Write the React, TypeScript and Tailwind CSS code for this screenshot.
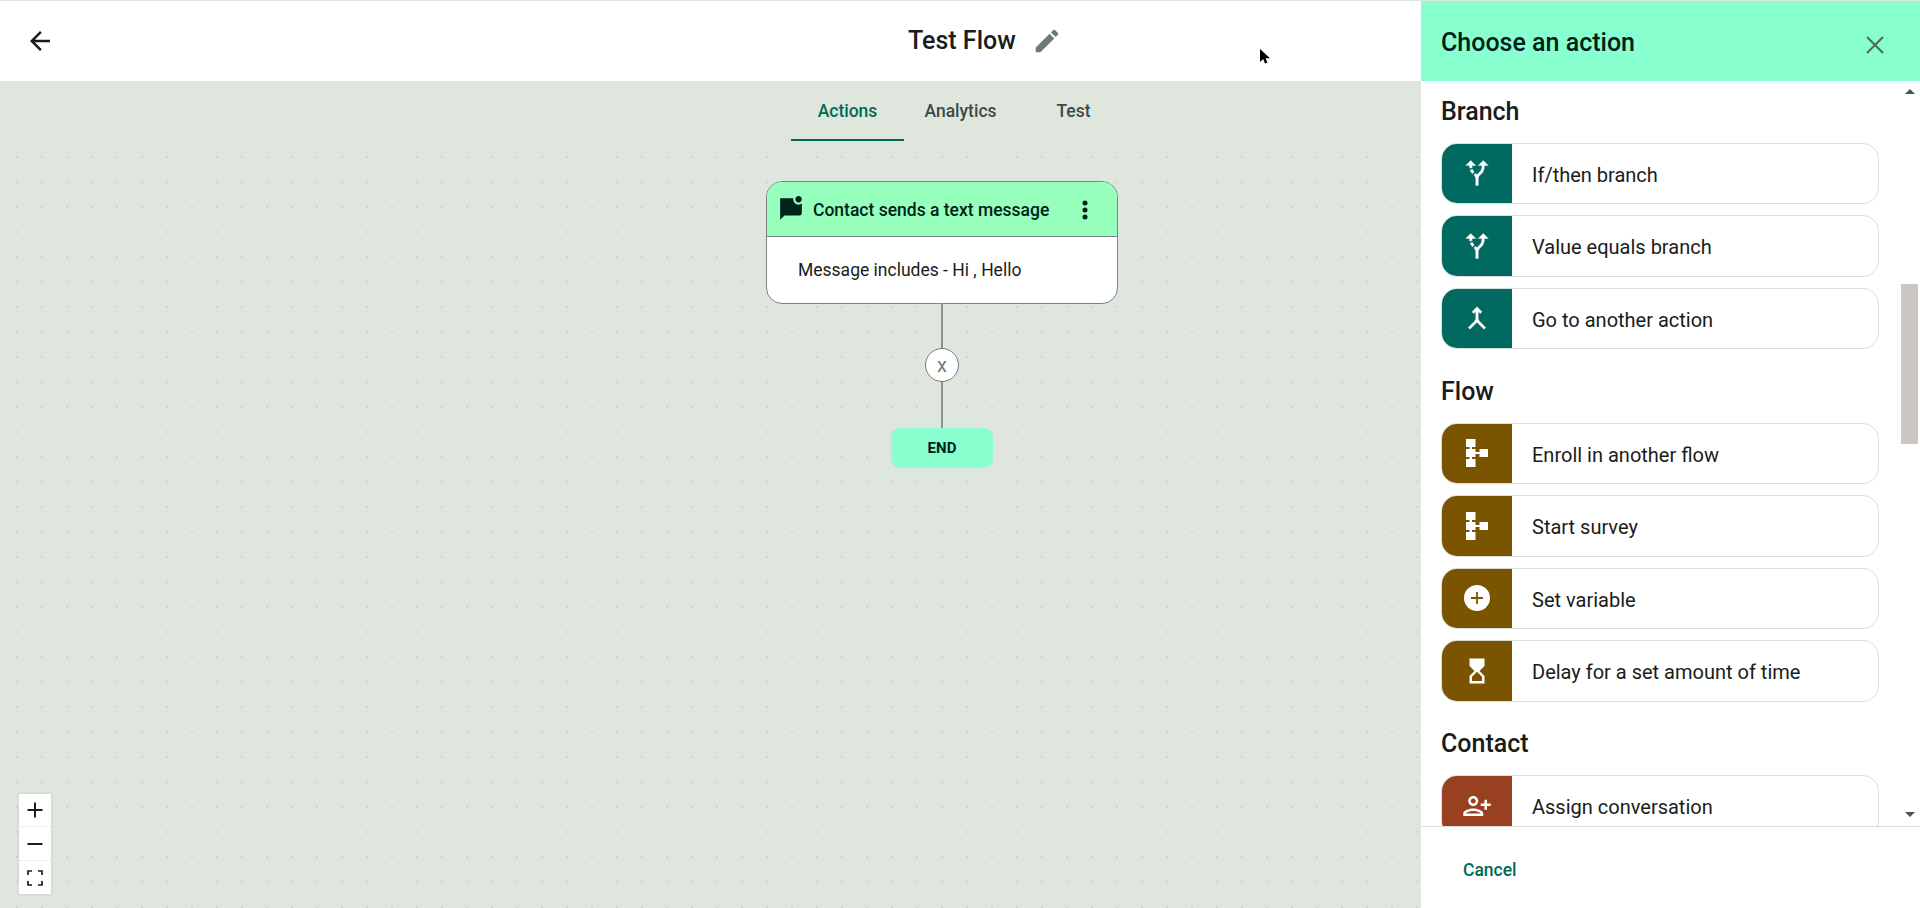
import React from "react";

const FONT = "font-['Roboto',sans-serif]";

const Icon = ({ d, size = 30, className = "" }: { d: string; size?: number; className?: string }) => (
  <svg width={size} height={size} viewBox="0 0 24 24" className={className} fill="currentColor">
    <path d={d} fillRule="evenodd" />
  </svg>
);

const ALT_ROUTE =
  "M9.78,11.16l-1.42,1.42c-0.68-0.69-1.34-1.58-1.79-2.94l1.94-0.49C8.83,10.04,9.28,10.65,9.78,11.16z M11,6L7,2L3,6h3.02C6.04,6.81,6.1,7.54,6.21,8.17l1.94-0.49C8.08,7.2,8.03,6.63,8.02,6H11z M21,6l-4-4l-4,4h2.99c-0.1,3.68-1.28,4.75-2.54,5.88c-0.5,0.44-1.01,0.92-1.45,1.55c-0.34-0.49-0.73-0.88-1.13-1.24L9.46,13.6C10.39,14.45,11,15.14,11,17c0,0,0,0,0,0h0v5h2v-5c0,0,0,0,0,0c0-2.02,0.71-2.66,1.79-3.63c1.38-1.24,3.08-2.78,3.2-7.37H21z";
const MERGE =
  "M6.41,21L5,19.59l4.83-4.83c0.75-0.75,1.17-1.77,1.17-2.83v-5.1L9.41,8.41L8,7l4-4l4,4l-1.41,1.41L13,6.83v5.1c0,1.06,0.42,2.08,1.17,2.83L19,19.59L17.59,21L12,15.41L6.41,21z";
const HOURGLASS =
  "M6,2l0.01,6L10,12l-3.99,4.01L6,22h12v-6l-4-4l4-3.99V2H6z M16,16.5V20H8v-3.5l4-4L16,16.5z";
const PERSON_ADD =
  "M9 12c2.21 0 4-1.79 4-4s-1.79-4-4-4-4 1.79-4 4 1.79 4 4 4zm0-6c1.1 0 2 .9 2 2s-.9 2-2 2-2-.9-2-2 .9-2 2-2zm0 8c-2.67 0-8 1.34-8 4v2h16v-2c0-2.66-5.33-4-8-4zm-6 4c.22-.72 3.31-2 6-2 2.7 0 5.8 1.29 6 2H3zm15-3v-3h-3v-2h3V7h2v3h3v2h-3v3h-2z";

const FlowIcon = () => (
  <svg width="22" height="28" viewBox="0 0 22 28" fill="white">
    <rect x="0" y="0" width="9.5" height="8" />
    <rect x="0" y="10" width="9.5" height="8" />
    <rect x="0" y="20" width="9.5" height="8" />
    <rect x="3.5" y="7" width="2.5" height="14" />
    <rect x="9" y="13" width="5" height="2" />
    <rect x="13.5" y="10" width="8.5" height="8" />
  </svg>
);

const PlusCircle = () => (
  <svg width="26" height="26" viewBox="0 0 26 26">
    <circle cx="13" cy="13" r="13" fill="white" />
    <path d="M13 7v12M7 13h12" stroke="#7b5400" strokeWidth="1.8" />
  </svg>
);

type Action = { label: string; icon: React.ReactNode };

const ActionRow = ({ label, icon, color }: Action & { color: string }) => (
  <div className="flex h-[61.5px] shrink-0 items-stretch overflow-hidden rounded-[16px] border border-[#d9e0dc] bg-white">
    <div className={`flex w-[70px] shrink-0 items-center justify-center text-white ${color}`}>{icon}</div>
    <span className="flex items-center pt-[3px] pl-[20px] text-[20px] leading-none text-[#191c1a]">{label}</span>
  </div>
);

const Section = ({ title, color, actions }: { title: string; color: string; actions: Action[] }) => (
  <section className="flex flex-col">
    <h3 className="mb-[17px] h-[29px] text-[25px] leading-[29px] font-medium text-[#191c1a]">{title}</h3>
    <div className="flex flex-col gap-[11px]">
      {actions.map((a) => (
        <ActionRow key={a.label} {...a} color={color} />
      ))}
    </div>
  </section>
);

const Scrollbar = () => (
  <div className="absolute top-0 right-[2px] bottom-0 flex w-[17px] flex-col items-center">
    <div className="mt-[8px] h-0 w-0 border-x-[5px] border-b-[5px] border-x-transparent border-b-[#44574c]" />
    <div className="mt-[190px] h-[160px] w-[17px] shrink-0 bg-[#cdc5c3]" />
    <div className="mt-auto mb-[9px] h-0 w-0 border-x-[5px] border-t-[5px] border-x-transparent border-t-[#44574c]" />
  </div>
);

const FlowNodes = () => (
  <>
    {/* trigger node */}
    <div className="absolute top-[39px] left-[766px] w-[352px] overflow-hidden rounded-[16px] border border-[#77857c] bg-white">
      <div className="flex h-[55px] items-center border-b border-[#77857c] bg-[#96ffbc] pt-[2px] pl-[11px]">
        <Icon
          size={26}
          className="mb-[3px] text-[#00221a]"
          d="M22 6.98V16c0 1.1-.9 2-2 2H6l-4 4V2h12.1c-.06.32-.1.66-.1 1 0 2.76 2.24 5 5 5 1.13 0 2.16-.39 3-1.02zM16 3c0 1.66 1.34 3 3 3s3-1.34 3-3-1.34-3-3-3-3 1.34-3 3z"
        />
        <span className="ml-[9px] text-[17.5px] font-medium whitespace-nowrap text-[#00211a]">Contact sends a text message</span>
        <svg width="6" height="20" viewBox="0 0 6 20" className="ml-[33px]" fill="#00211a">
          <circle cx="3" cy="3" r="2.5" />
          <circle cx="3" cy="10" r="2.5" />
          <circle cx="3" cy="17" r="2.5" />
        </svg>
      </div>
      <div className="flex h-[66px] items-center pl-[31px] text-[17.5px] text-[#191c1a]">Message includes - Hi , Hello</div>
    </div>
    {/* connector */}
    <div className="absolute top-[161px] left-[941px] h-[125px] w-[2px] bg-[#8b958e]" />
    <div className="absolute top-[206px] left-[925px] flex h-[34px] w-[34px] items-center justify-center rounded-full border border-[#6f7d74] bg-white pb-[1px] text-[20px] text-[#6f7d74]">
      x
    </div>
    <div className="absolute top-[286px] left-[891px] flex h-[40px] w-[102px] items-center justify-center rounded-[9px] bg-[#88ffcf] text-[15px] font-bold text-[#00211a]">
      END
    </div>
  </>
);

const ZoomControls = () => (
  <div className="absolute bottom-[14px] left-[19px] flex w-[32px] flex-col bg-white shadow-[0_0_2px_1px_rgba(0,0,0,0.08)]">
    <button className="flex h-[33px] items-center justify-center border-b border-[#eeeeee]">
      <svg width="16" height="16" viewBox="0 0 16 16" stroke="#1c1c1c" strokeWidth="2">
        <path d="M0.5 8h15M8 0.5v15" />
      </svg>
    </button>
    <button className="flex h-[34px] items-center justify-center border-b border-[#eeeeee]">
      <svg width="16" height="16" viewBox="0 0 16 16" stroke="#1c1c1c" strokeWidth="2">
        <path d="M0.5 8h15" />
      </svg>
    </button>
    <button className="flex h-[33px] items-center justify-center">
      <svg width="16" height="16" viewBox="0 0 16 16" stroke="#1c1c1c" strokeWidth="1.7" fill="none">
        <path d="M1 5V1h4M11 1h4v4M15 11v4h-4M5 15H1v-4" />
      </svg>
    </button>
  </div>
);

const thick = "stroke-current stroke-[0.3]";

const branchActions: Action[] = [
  { label: "If/then branch", icon: <Icon d={ALT_ROUTE} className={thick} /> },
  { label: "Value equals branch", icon: <Icon d={ALT_ROUTE} className={thick} /> },
  { label: "Go to another action", icon: <Icon d={MERGE} className={thick} /> },
];

const flowActions: Action[] = [
  { label: "Enroll in another flow", icon: <FlowIcon /> },
  { label: "Start survey", icon: <FlowIcon /> },
  { label: "Set variable", icon: <PlusCircle /> },
  { label: "Delay for a set amount of time", icon: <Icon d={HOURGLASS} /> },
];

const contactActions: Action[] = [{ label: "Assign conversation", icon: <Icon d={PERSON_ADD} /> }];

const tabClass = "flex h-[60px] w-[113px] items-center justify-center text-[17.5px] font-medium";

const App = () => {
  return (
    <div className={`relative flex h-[908px] w-[1920px] overflow-hidden border-t border-[#dfe6de] bg-[#dfe6de] ${FONT}`}>
      <div className="flex min-w-0 flex-1 flex-col">
        <header className="flex h-[80px] shrink-0 items-center bg-white pl-[25px]">
          <Icon size={30} className="text-[#191c1a]" d="M20 11H7.83l5.59-5.59L12 4l-8 8 8 8 1.41-1.41L7.83 13H20v-2z" />
          <h1 className="ml-[853px] text-[25px] font-medium text-[#191c1a]">Test Flow</h1>
          <Icon
            size={30}
            className="ml-[16px] text-[#6e7b72]"
            d="M3 17.25V21h3.75L17.81 9.94l-3.75-3.75L3 17.25zM20.71 7.04c.39-.39.39-1.02 0-1.41l-2.34-2.34c-.39-.39-1.02-.39-1.41 0l-1.83 1.83 3.75 3.75 1.83-1.83z"
          />
        </header>
        <nav className="flex h-[61px] shrink-0 border-b border-[#d9e1d8] pl-[791px]">
          <a className={`${tabClass} border-b-2 border-[#006a55] pt-[3px] text-[#006a55]`}>Actions</a>
          <a className={`${tabClass} pt-[1px] text-[#404943]`}>Analytics</a>
          <a className={`${tabClass} pt-[1px] text-[#404943]`}>Test</a>
        </nav>
        <main className="relative flex-1 bg-[radial-gradient(#9aa39a_0.8px,transparent_1px)] bg-[size:25px_25px] bg-[position:4.5px_2.5px]">
          <FlowNodes />
          <ZoomControls />
        </main>
      </div>

      <aside className="flex w-[499px] shrink-0 flex-col bg-white">
        <div className="flex h-[80px] shrink-0 items-center justify-between bg-[#88ffcf] pr-[36px] pl-[20px]">
          <h2 className="pt-[2px] text-[25px] leading-none font-medium text-[#00211a]">Choose an action</h2>
          <svg width="18" height="18" viewBox="0 0 18 18" className="mt-[7px]" stroke="#4b6b59" strokeWidth="2">
            <path d="M1 1l16 16M17 1L1 17" />
          </svg>
        </div>
        <div className="relative flex-1 overflow-hidden border-b border-[#d9e0dc]">
          <div className="flex h-[900px] w-[458px] flex-col gap-[27.5px] pt-[15.5px] pl-[20px]">
            <Section title="Branch" color="bg-[#006a60]" actions={branchActions} />
            <Section title="Flow" color="bg-[#7b5400]" actions={flowActions} />
            <Section title="Contact" color="bg-[#984020]" actions={contactActions} />
          </div>
          <Scrollbar />
        </div>
        <div className="flex h-[81px] shrink-0 items-center pt-[5px] pl-[42px]">
          <button className="text-[17.5px] font-medium text-[#006a55]">Cancel</button>
        </div>
      </aside>

      {/* mouse cursor captured in the shot */}
      <svg width="12" height="18" viewBox="0 0 12 18" className="absolute top-[48px] left-[1260px]">
        <path d="M0 0v13l3.2-3L5 14.5l2.4-.9-1.8-4.3H10z" fill="#000" />
      </svg>
    </div>
  );
};

export default App;
